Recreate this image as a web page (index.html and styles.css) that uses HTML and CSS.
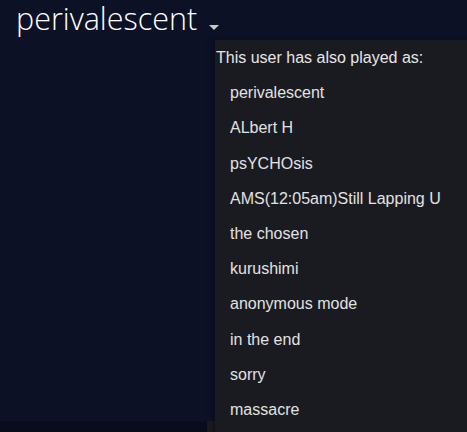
FILE: index.html
```html
<!DOCTYPE html>
<html>
<head>
<meta charset="utf-8">
<link rel="stylesheet" href="styles.css">
</head>
<body>
<div class="page">
  <div class="top">
    <div class="persona">
      <span class="name">perivalescent</span>
      <span class="arrow"></span>
    </div>
  </div>
  <div class="lower">
    <div class="lower-left"></div>
    <div class="lower-main"></div>
  </div>
  <div class="dropdown">
    <div class="dd-title">This user has also played as:</div>
    <div class="dd-item">perivalescent</div>
    <div class="dd-item">ALbert H</div>
    <div class="dd-item">psYCHOsis</div>
    <div class="dd-item">AMS(12:05am)Still Lapping U</div>
    <div class="dd-item">the chosen</div>
    <div class="dd-item">kurushimi</div>
    <div class="dd-item">anonymous mode</div>
    <div class="dd-item">in the end</div>
    <div class="dd-item">sorry</div>
    <div class="dd-item">massacre</div>
  </div>
</div>
</body>
</html>
```
FILE: styles.css
```css
html, body {
  margin: 0;
  padding: 0;
  height: 100%;
  overflow: hidden;
  background: #0c1126;
}
.page {
  position: relative;
  height: 432px;
  display: flex;
  flex-direction: column;
}
.top {
  height: 421px;
  background: #0c1126;
}
.persona {
  display: flex;
  align-items: flex-end;
  padding: 0 0 0 16px;
}
.name {
  font-family: "Open Sans", sans-serif;
  font-weight: 300;
  font-size: 30.5px;
  line-height: 36px;
  color: #ffffff;
}
.arrow {
  width: 0;
  height: 0;
  border-left: 5px solid transparent;
  border-right: 5px solid transparent;
  border-top: 5px solid #c8c8c8;
  margin: 0 0 6px 12px;
}
.lower {
  flex: 1;
  display: flex;
}
.lower-left {
  width: 207px;
  background: #080c1c;
}
.lower-main {
  flex: 1;
  background: #1a1b20;
}
.dropdown {
  position: absolute;
  left: 215px;
  top: 40px;
  width: 270px;
  bottom: -20px;
  background: #1a1b20;
  box-shadow: -2px 0 6px rgba(0, 0, 0, 0.35);
  font-family: "Liberation Sans", Arial, sans-serif;
  font-size: 16px;
  line-height: 19.2px;
}
.dd-title {
  padding: 8px 0 8px 1px;
  color: #e6e6e6;
}
.dd-item {
  padding: 8px 15px;
  color: #e2e2e2;
  white-space: nowrap;
}
```
